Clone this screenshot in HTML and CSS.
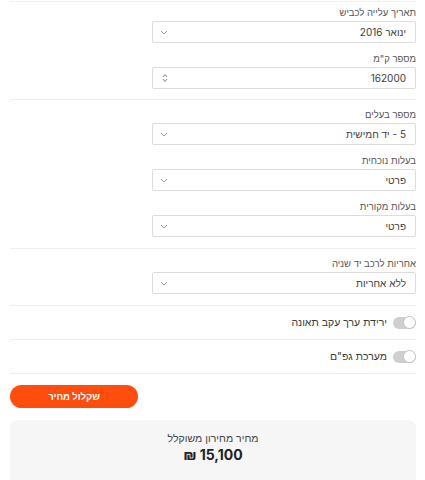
FILE: index.html
```html
<!DOCTYPE html>
<html lang="he" dir="rtl">
<head>
    <meta charset="UTF-8">
    <meta name="viewport" content="width=device-width, initial-scale=1.0">
    <title>מחירון רכב</title>
    <link rel="stylesheet" href="styles.css">
</head>
<body>
    <div class="calc">
        <!-- פרטי רכב -->
        <div class="section">
            <div class="field">
                <label class="label">תאריך עלייה לכביש</label>
                <div class="control">
                    <span class="value">ינואר 2016</span>
                    <svg class="chevron" width="8" height="5" viewBox="0 0 8 5"><path d="M1 1l3 3 3-3" fill="none" stroke="#999" stroke-width="1"/></svg>
                </div>
            </div>
            <div class="field">
                <label class="label">מספר ק"מ</label>
                <div class="control">
                    <span class="value">162000</span>
                    <svg class="spin" width="6" height="10" viewBox="0 0 6 10"><path d="M1 4l2-2.5L5 4M1 6l2 2.5L5 6" fill="none" stroke="#888" stroke-width="1"/></svg>
                </div>
            </div>
        </div>

        <!-- בעלות -->
        <div class="section">
            <div class="field">
                <label class="label">מספר בעלים</label>
                <div class="control">
                    <span class="value">5 - יד חמישית</span>
                    <svg class="chevron" width="8" height="5" viewBox="0 0 8 5"><path d="M1 1l3 3 3-3" fill="none" stroke="#999" stroke-width="1"/></svg>
                </div>
            </div>
            <div class="field">
                <label class="label">בעלות נוכחית</label>
                <div class="control">
                    <span class="value">פרטי</span>
                    <svg class="chevron" width="8" height="5" viewBox="0 0 8 5"><path d="M1 1l3 3 3-3" fill="none" stroke="#999" stroke-width="1"/></svg>
                </div>
            </div>
            <div class="field">
                <label class="label">בעלות מקורית</label>
                <div class="control">
                    <span class="value">פרטי</span>
                    <svg class="chevron" width="8" height="5" viewBox="0 0 8 5"><path d="M1 1l3 3 3-3" fill="none" stroke="#999" stroke-width="1"/></svg>
                </div>
            </div>
        </div>

        <!-- אחריות -->
        <div class="section">
            <div class="field">
                <label class="label">אחריות לרכב יד שניה</label>
                <div class="control">
                    <span class="value">ללא אחריות</span>
                    <svg class="chevron" width="8" height="5" viewBox="0 0 8 5"><path d="M1 1l3 3 3-3" fill="none" stroke="#999" stroke-width="1"/></svg>
                </div>
            </div>
        </div>

        <!-- מתגים -->
        <div class="toggle-row">
            <span class="switch"><span class="knob"></span></span>
            <span class="toggle-text">ירידת ערך עקב תאונה</span>
        </div>
        <div class="toggle-row">
            <span class="switch"><span class="knob"></span></span>
            <span class="toggle-text">מערכת גפ"ם</span>
        </div>

        <div class="actions">
            <button class="calc-btn">שקלול מחיר</button>
        </div>

        <div class="result">
            <div class="result-title">מחיר מחירון משוקלל</div>
            <div class="result-price">15,100 ₪</div>
        </div>
    </div>
</body>
</html>
```

FILE: styles.css
```css
* {
    margin: 0;
    padding: 0;
    box-sizing: border-box;
}

body {
    background: #fff;
    color: #333;
    font-family: Inter, "Liberation Sans", sans-serif;
}

.calc {
    padding: 1px 9px 0 10px;
}

/* קבוצות שדות */
.section {
    display: flex;
    flex-direction: column;
    gap: 9px;
    padding: 8px 0 11px;
    border-bottom: 1px solid #eeeeee;
}

.section:first-child {
    border-top: 1px solid #f2f2f2;
    padding-top: 4px;
    padding-bottom: 10px;
}

.field {
    display: flex;
    flex-direction: column;
    align-items: flex-start;
}

.label {
    font-size: 9.5px;
    line-height: 14px;
    color: #555;
    margin-bottom: 1px;
}

.control {
    width: 264px;
    height: 22px;
    border: 1px solid #dcdcdc;
    border-radius: 2px;
    display: flex;
    align-items: center;
    justify-content: space-between;
    padding: 0 9px 0 7px;
}

.value {
    font-size: 10px;
    color: #3c3c3c;
}

.spin {
    margin-left: 2px;
}

/* מתגים */
.toggle-row {
    display: flex;
    align-items: center;
    gap: 6px;
    height: 34px;
    border-bottom: 1px solid #eeeeee;
}

.switch {
    position: relative;
    width: 23px;
    height: 12px;
    border-radius: 6px;
    background: #cfcfcf;
}

.knob {
    position: absolute;
    right: 0;
    top: -0.5px;
    width: 13px;
    height: 13px;
    border-radius: 50%;
    background: #fff;
    border: 1px solid #c4c4c4;
}

.toggle-text {
    font-size: 10.5px;
    color: #3a3a3a;
}

/* כפתור ותוצאה */
.actions {
    display: flex;
    justify-content: flex-end;
    padding-top: 11px;
}

.calc-btn {
    width: 128px;
    height: 23px;
    border: none;
    border-radius: 12px;
    background: #ff4d0d;
    color: #fff;
    font-family: inherit;
    font-size: 9.5px;
    font-weight: bold;
}

.result {
    margin-top: 12px;
    height: 70px;
    background: #f6f6f6;
    border-radius: 8px;
    display: flex;
    flex-direction: column;
    align-items: center;
    padding-top: 12px;
}

.result-title {
    font-size: 10.5px;
    line-height: 14px;
    color: #444;
}

.result-price {
    font-size: 14px;
    line-height: 18px;
    font-weight: bold;
    color: #222;
}
```
